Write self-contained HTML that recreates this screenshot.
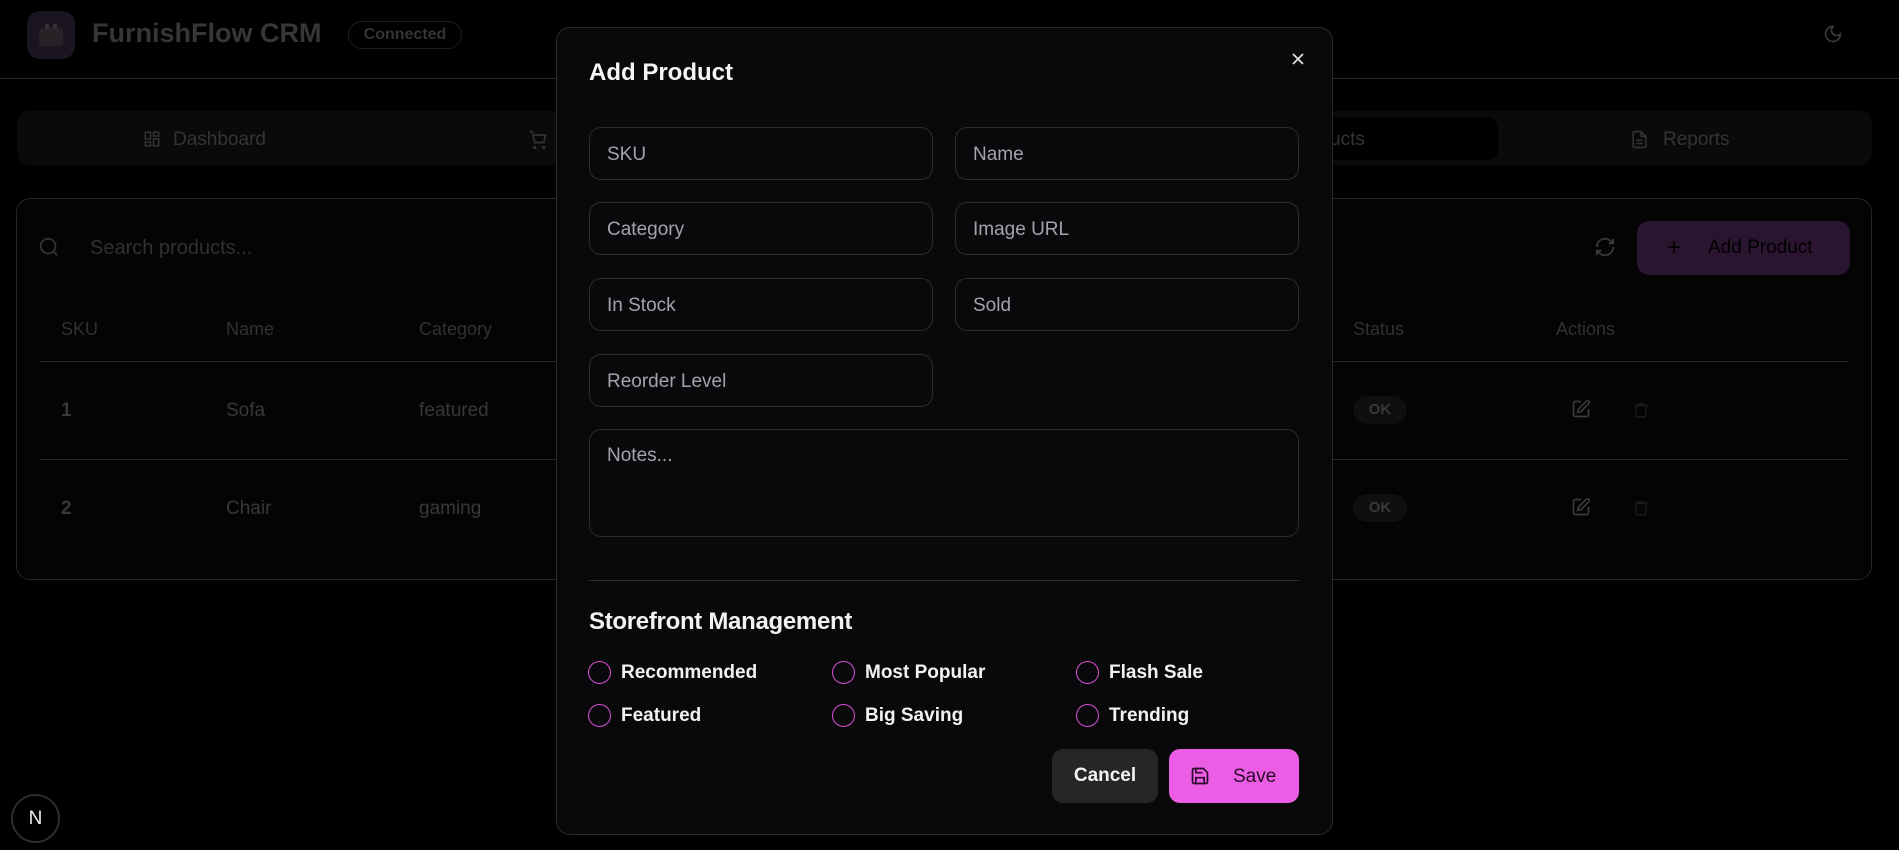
<!DOCTYPE html>
<html><head><meta charset="utf-8"><style>
*{box-sizing:border-box;margin:0;padding:0}
body{width:1899px;height:850px;background:#000;font-family:"Liberation Sans",sans-serif;position:relative;overflow:hidden;color:#3a3a3d}
.abs{position:absolute}
.dim{color:#343437}
.inp{position:absolute;height:53px;border:1px solid #2b2b30;border-radius:12px;color:#a3a3ab;font-size:19px;padding:0 17px;line-height:53px}
.chk{position:absolute;font-size:19px;font-weight:bold;color:#f2f2f2}
.chk span{position:absolute;left:-33px;top:-1px;width:23px;height:23px;border:1.5px solid #d94fd3;border-radius:50%}
.th{position:absolute;top:319px;font-size:18px;color:#313134}
.td{position:absolute;font-size:19px;color:#38383c}
.ok{position:absolute;left:1353px;width:54px;height:28px;border-radius:14px;background:#0f0f11;color:#38383a;font-size:15px;font-weight:bold;text-align:center;line-height:28px}
</style></head><body>
<div class="abs" style="left:27px;top:11px;width:48px;height:48px;border-radius:13px;background:#1a1520"></div>
<svg class="abs" style="left:37px;top:22px" width="28" height="26" viewBox="0 0 28 26"><rect x="2" y="6" width="24" height="18" rx="3" fill="#262226"/><rect x="8" y="2" width="4" height="5" fill="#333"/><rect x="16" y="2" width="4" height="5" fill="#333"/></svg>
<div class="abs" style="left:92px;top:18px;font-size:27px;font-weight:bold;color:#363638">FurnishFlow CRM</div>
<div class="abs" style="left:348px;top:21px;width:114px;height:28px;border:1px solid #1e1e20;border-radius:14px;font-size:16px;font-weight:bold;color:#343436;text-align:center;line-height:26px">Connected</div>
<svg class="abs" style="left:1823px;top:24px" width="20" height="20" viewBox="0 0 24 24" fill="none" stroke="#3a3a3c" stroke-width="2"><path d="M12 3a6 6 0 0 0 9 9 9 9 0 1 1-9-9Z"/></svg>
<div class="abs" style="left:0;top:78px;width:1899px;height:1px;background:#2a2a2c"></div>
<div class="abs" style="left:17px;top:111px;width:1855px;height:54px;border-radius:12px;background:#0a0a0c"></div>
<div class="abs" style="left:1133px;top:117px;width:365px;height:43px;border-radius:10px;background:#000"></div>
<svg class="abs" style="left:143px;top:130px" width="18" height="18" viewBox="0 0 24 24" fill="none" stroke="#333336" stroke-width="2"><rect x="3" y="3" width="7" height="9"/><rect x="14" y="3" width="7" height="5"/><rect x="14" y="12" width="7" height="9"/><rect x="3" y="16" width="7" height="5"/></svg>
<div class="abs dim" style="left:173px;top:129px;font-size:19px">Dashboard</div>
<svg class="abs" style="left:528px;top:130px" width="20" height="20" viewBox="0 0 24 24" fill="none" stroke="#333336" stroke-width="2"><circle cx="8" cy="21" r="1"/><circle cx="19" cy="21" r="1"/><path d="M2 2h3l3 13h11l2-9H6"/></svg>
<div class="abs dim" style="left:1330px;top:129px;font-size:19px">ucts</div>
<svg class="abs" style="left:1630px;top:129px" width="19" height="21" viewBox="0 0 24 24" fill="none" stroke="#333336" stroke-width="2"><path d="M14 2H6a2 2 0 0 0-2 2v16a2 2 0 0 0 2 2h12a2 2 0 0 0 2-2V8z"/><path d="M14 2v6h6M8 13h8M8 17h8"/></svg>
<div class="abs dim" style="left:1663px;top:129px;font-size:19px">Reports</div>
<div class="abs" style="left:16px;top:198px;width:1856px;height:382px;border:1px solid #262628;border-radius:14px;background:#040405"></div>
<svg class="abs" style="left:38px;top:236px" width="22" height="22" viewBox="0 0 24 24" fill="none" stroke="#333336" stroke-width="2"><circle cx="11" cy="11" r="8"/><path d="m21 21-4.3-4.3"/></svg>
<div class="abs" style="left:90px;top:237px;font-size:20px;color:#313134">Search products...</div>
<svg class="abs" style="left:1594px;top:236px" width="22" height="22" viewBox="0 0 24 24" fill="none" stroke="#3a3a3c" stroke-width="2"><path d="M3 12a9 9 0 0 1 15-6.7L21 8M21 3v5h-5M21 12a9 9 0 0 1-15 6.7L3 16M3 21v-5h5"/></svg>
<div class="abs" style="left:1637px;top:221px;width:213px;height:54px;border-radius:12px;background:#2a1430"></div>
<div class="abs" style="left:1667px;top:234px;font-size:24px;color:#000">+</div>
<div class="abs" style="left:1708px;top:237px;font-size:19px;color:#000">Add Product</div>
<div class="th" style="left:61px">SKU</div><div class="th" style="left:226px">Name</div><div class="th" style="left:419px">Category</div><div class="th" style="left:1353px">Status</div><div class="th" style="left:1556px">Actions</div>
<div class="abs" style="left:39px;top:361px;width:1810px;height:1px;background:#262628"></div>
<div class="abs" style="left:39px;top:459px;width:1810px;height:1px;background:#262628"></div>
<div class="td" style="left:61px;top:400px;font-weight:bold">1</div><div class="td" style="left:226px;top:400px">Sofa</div><div class="td" style="left:419px;top:400px">featured</div>
<div class="td" style="left:61px;top:498px;font-weight:bold">2</div><div class="td" style="left:226px;top:498px">Chair</div><div class="td" style="left:419px;top:498px">gaming</div>
<div class="ok" style="top:396px">OK</div><div class="ok" style="top:494px">OK</div>
<svg class="abs" style="left:1571px;top:399px" width="20" height="20" viewBox="0 0 24 24" fill="none" stroke="#3a3a3c" stroke-width="2"><path d="M12 3H5a2 2 0 0 0-2 2v14a2 2 0 0 0 2 2h14a2 2 0 0 0 2-2v-7"/><path d="M18.4 2.6a2 2 0 0 1 3 3L12 15l-4 1 1-4z"/></svg>
<svg class="abs" style="left:1571px;top:497px" width="20" height="20" viewBox="0 0 24 24" fill="none" stroke="#3a3a3c" stroke-width="2"><path d="M12 3H5a2 2 0 0 0-2 2v14a2 2 0 0 0 2 2h14a2 2 0 0 0 2-2v-7"/><path d="M18.4 2.6a2 2 0 0 1 3 3L12 15l-4 1 1-4z"/></svg>
<svg class="abs" style="left:1632px;top:400px" width="18" height="20" viewBox="0 0 24 24" fill="none" stroke="#1a1a1c" stroke-width="2"><path d="M3 6h18M8 6V4h8v2M5 6l1 15h12l1-15"/></svg>
<svg class="abs" style="left:1632px;top:498px" width="18" height="20" viewBox="0 0 24 24" fill="none" stroke="#1a1a1c" stroke-width="2"><path d="M3 6h18M8 6V4h8v2M5 6l1 15h12l1-15"/></svg>
<div class="abs" style="left:11px;top:794px;width:49px;height:49px;border-radius:50%;border:2px solid #2c2c2e;background:#000;color:#eee;font-size:19px;text-align:center;line-height:45px">N</div>
<div class="abs" style="left:556px;top:27px;width:777px;height:808px;border:1px solid #2a2a2e;border-radius:14px;background:#09090b"></div>
<div class="abs" style="left:589px;top:59px;font-size:24px;font-weight:bold;color:#f5f5f5">Add Product</div>
<svg class="abs" style="left:1290px;top:51px" width="16" height="16" viewBox="0 0 16 16" stroke="#ddd" stroke-width="1.8"><path d="M3 3l10 10M13 3 3 13"/></svg>
<div class="inp" style="left:589px;top:127px;width:344px">SKU</div>
<div class="inp" style="left:955px;top:127px;width:344px">Name</div>
<div class="inp" style="left:589px;top:202px;width:344px">Category</div>
<div class="inp" style="left:955px;top:202px;width:344px">Image URL</div>
<div class="inp" style="left:589px;top:278px;width:344px">In Stock</div>
<div class="inp" style="left:955px;top:278px;width:344px">Sold</div>
<div class="inp" style="left:589px;top:354px;width:344px">Reorder Level</div>
<div class="inp" style="left:589px;top:429px;width:710px;height:108px;line-height:22px;padding-top:15px">Notes...</div>
<div class="abs" style="left:589px;top:580px;width:710px;height:1px;background:#2a2a2e"></div>
<div class="abs" style="left:589px;top:608px;font-size:24px;font-weight:bold;color:#f2f2f2;letter-spacing:-0.3px">Storefront Management</div>
<div class="chk" style="left:621px;top:662px"><span></span>Recommended</div>
<div class="chk" style="left:865px;top:662px"><span></span>Most Popular</div>
<div class="chk" style="left:1109px;top:662px"><span></span>Flash Sale</div>
<div class="chk" style="left:621px;top:705px"><span></span>Featured</div>
<div class="chk" style="left:865px;top:705px"><span></span>Big Saving</div>
<div class="chk" style="left:1109px;top:705px"><span></span>Trending</div>
<div class="abs" style="left:1052px;top:749px;width:106px;height:54px;border-radius:11px;background:#262628;color:#f2f2f2;font-size:19px;font-weight:bold;text-align:center;line-height:54px">Cancel</div>
<div class="abs" style="left:1169px;top:749px;width:130px;height:54px;border-radius:11px;background:#ec5de6"></div>
<svg class="abs" style="left:1190px;top:766px" width="20" height="20" viewBox="0 0 24 24" fill="none" stroke="#2a0a28" stroke-width="2"><path d="M5 3h11l5 5v11a2 2 0 0 1-2 2H5a2 2 0 0 1-2-2V5a2 2 0 0 1 2-2z"/><path d="M7 3v5h8M7 21v-7h10v7"/></svg>
<div class="abs" style="left:1233px;top:766px;font-size:19px;color:#2a0a28">Save</div>
</body></html>
